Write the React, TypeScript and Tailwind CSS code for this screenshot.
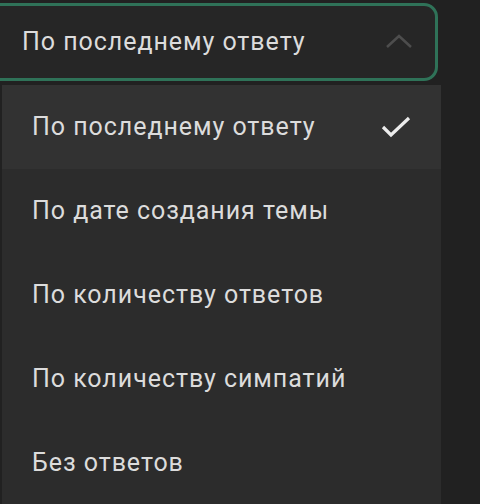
const options = [
  "По последнему ответу",
  "По дате создания темы",
  "По количеству ответов",
  "По количеству симпатий",
  "Без ответов",
]

export default function App() {
  const selected = 0

  return (
    <div className="w-[480px] h-[504px] overflow-hidden bg-[#212121] font-['Roboto',sans-serif]">
      {/* Select */}
      <div className="pt-[3px]">
        <div className="ml-[-14px] w-[452px] h-[78px] rounded-[14px] border-[3px] border-[#2f7258] bg-[#262626] flex items-center justify-between pl-[33px] pr-[22px]">
          <span className="text-[25px] text-[#dcdcdc] tracking-[0.95px]">По последнему ответу</span>
          <svg width="28" height="16" viewBox="0 0 28 16" fill="none">
            <path d="M2 13 L14 2 L26 13" stroke="#4d4d4d" strokeWidth="2.5" />
          </svg>
        </div>
      </div>

      {/* Dropdown */}
      <div className="mt-[4px] ml-[2px] w-[439px] h-[420px] bg-[#2c2c2c] flex flex-col">
        {options.map((o, i) => (
          <div
            key={o}
            className={
              "h-[84px] shrink-0 flex items-center justify-between pl-[30px] pr-[30px] " +
              (i === selected ? "bg-[#323232]" : "")
            }
          >
            <span className="text-[25px] text-[#dcdcdc] tracking-[0.95px]">{o}</span>
            {i === selected && (
              <svg width="30" height="22" viewBox="0 0 30 22" fill="none">
                <path d="M2 11 L10 19 L28 2" stroke="#ececec" strokeWidth="3.2" />
              </svg>
            )}
          </div>
        ))}
      </div>
    </div>
  )
}
